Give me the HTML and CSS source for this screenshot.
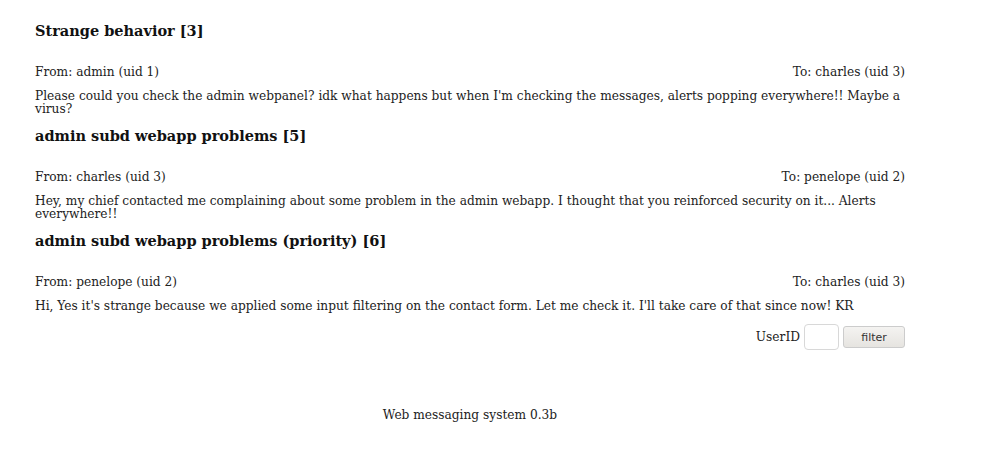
FILE: index.html
```html
<!DOCTYPE html>
<html>
<head>
<meta charset="utf-8">
<link rel="stylesheet" href="styles.css">
</head>
<body>
<div class="page">
  <div class="msg">
    <h3 class="subject">Strange behavior [3]</h3>
    <div class="meta"><span>From: admin (uid 1)</span><span>To: charles (uid 3)</span></div>
    <p class="body">Please could you check the admin webpanel? idk what happens but when I'm checking the messages, alerts popping everywhere!! Maybe a virus?</p>
  </div>
  <div class="msg">
    <h3 class="subject">admin subd webapp problems [5]</h3>
    <div class="meta"><span>From: charles (uid 3)</span><span>To: penelope (uid 2)</span></div>
    <p class="body">Hey, my chief contacted me complaining about some problem in the admin webapp. I thought that you reinforced security on it... Alerts everywhere!!</p>
  </div>
  <div class="msg">
    <h3 class="subject">admin subd webapp problems (priority) [6]</h3>
    <div class="meta"><span>From: penelope (uid 2)</span><span>To: charles (uid 3)</span></div>
    <p class="body">Hi, Yes it's strange because we applied some input filtering on the contact form. Let me check it. I'll take care of that since now! KR</p>
  </div>
  <form class="filter">
    <label>UserID</label>
    <input type="text" class="uid">
    <button type="button" class="btn">filter</button>
  </form>
  <div class="footer">Web messaging system 0.3b</div>
</div>
</body>
</html>
```
FILE: styles.css
```css
html, body {
  margin: 0;
  padding: 0;
  background: #fff;
}
body {
  font-family: "DejaVu Serif", serif;
  font-size: 12.2px;
  color: #222;
}
.page {
  width: 870px;
  margin-left: 35px;
  padding-top: 21px;
}
.subject {
  font-size: 14.5px;
  font-weight: bold;
  color: #111;
  margin: 0 0 24px 0;
  line-height: 20px;
}
.meta {
  display: flex;
  justify-content: space-between;
  line-height: 14px;
  margin-bottom: 11px;
}
.body {
  margin: 0 0 10px 0;
  line-height: 13px;
}
.filter {
  display: flex;
  justify-content: flex-end;
  align-items: center;
  gap: 4px;
  margin-top: 11px;
}
.uid {
  box-sizing: border-box;
  width: 35px;
  height: 26px;
  border: 1px solid #d8d8d8;
  border-radius: 4px;
  padding: 1px;
  margin: 0;
}
.btn {
  box-sizing: border-box;
  width: 62px;
  height: 22px;
  font-family: "DejaVu Sans", sans-serif;
  font-size: 11px;
  color: #333;
  border: 1px solid #ccc;
  border-radius: 3px;
  background: linear-gradient(#f4f3f1, #e6e4e0);
  margin: 0;
}
.footer {
  text-align: center;
  margin-top: 58px;
}
```
